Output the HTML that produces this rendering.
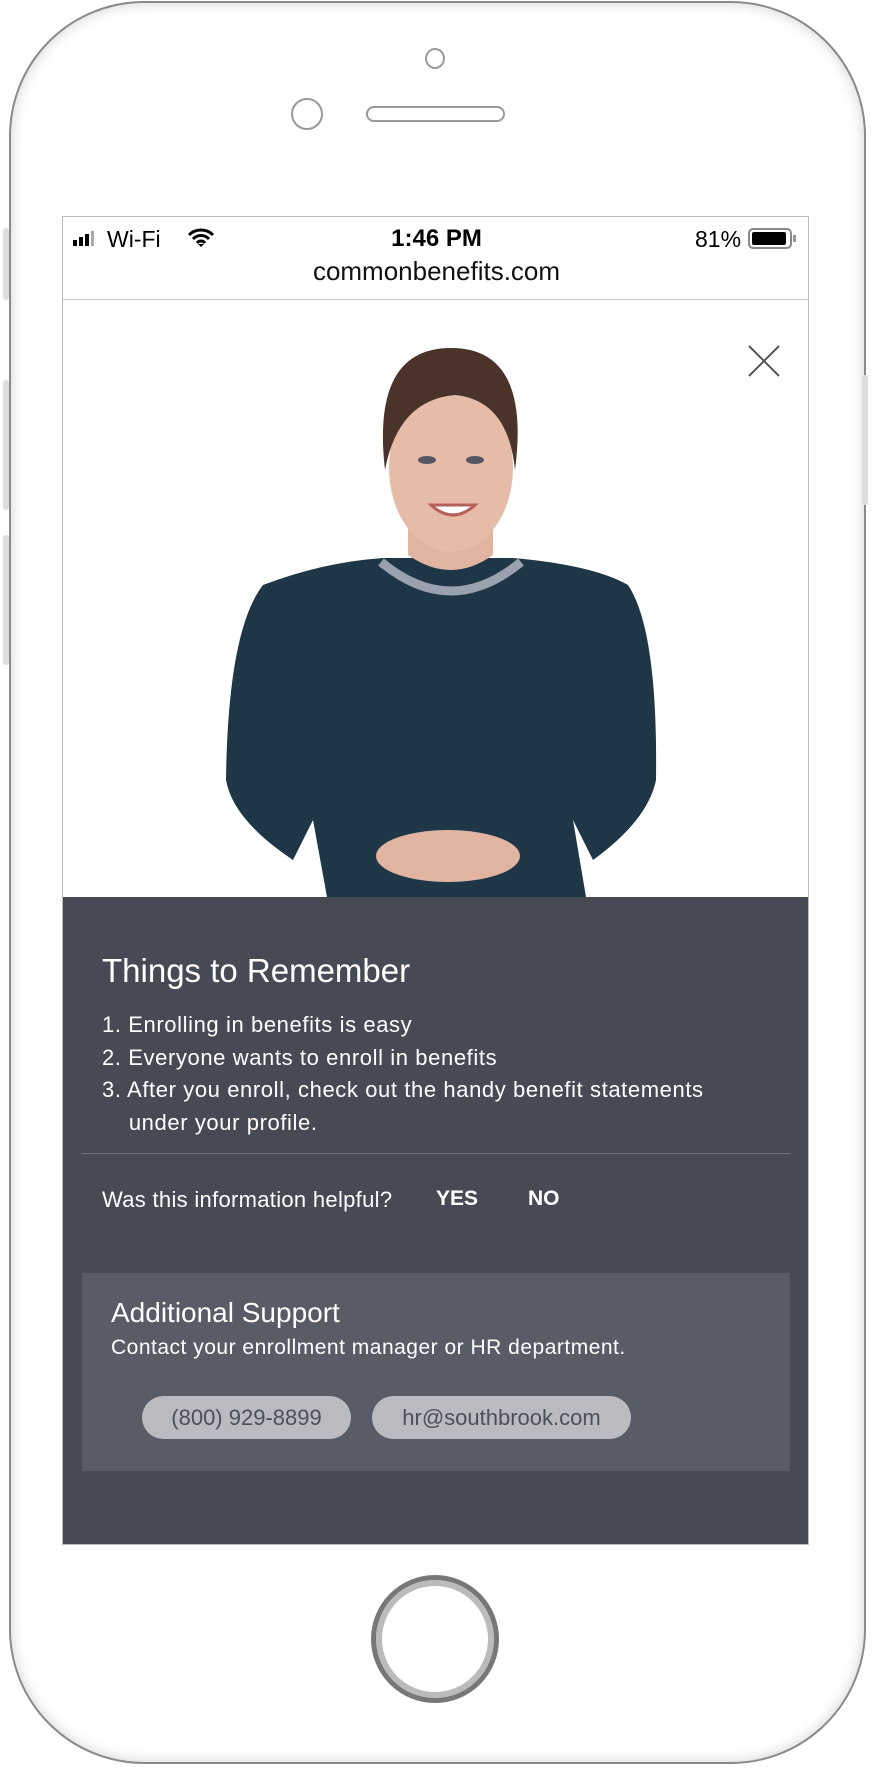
<!DOCTYPE html>
<html><head><meta charset="utf-8"><style>
*{margin:0;padding:0;box-sizing:border-box}
body{width:872px;height:1768px;background:#fff;position:relative;overflow:hidden;font-family:"Liberation Sans",sans-serif}
.abs{position:absolute}
.phone{left:9px;top:1px;width:857px;height:1763px;border:2px solid #8a8a8a;border-radius:135px;background:#fff;box-shadow:inset 0 0 14px rgba(0,0,0,.18)}
.screen{left:62px;top:216px;width:747px;height:1329px;border:1px solid #bbb;background:#fff;overflow:hidden}
.t{position:absolute;white-space:nowrap}
.dark{left:0;top:680px;width:747px;height:649px;background:#454a54}
.pill{position:absolute;height:43px;border-radius:22px;background:#b9bbc0;color:#4a4f58;font-size:22px;line-height:43px;text-align:center}
</style></head><body>
<div class="abs phone"></div>
<div class="abs" style="left:3px;top:228px;width:6px;height:72px;background:#ddd;border-radius:3px"></div>
<div class="abs" style="left:3px;top:380px;width:6px;height:130px;background:#ddd;border-radius:3px"></div>
<div class="abs" style="left:3px;top:535px;width:6px;height:130px;background:#ddd;border-radius:3px"></div>
<div class="abs" style="left:862px;top:375px;width:6px;height:130px;background:#ddd;border-radius:3px"></div>
<div class="abs" style="left:425px;top:48px;width:20px;height:21px;border:2px solid #999;border-radius:50%"></div>
<div class="abs" style="left:291px;top:98px;width:32px;height:32px;border:2px solid #999;border-radius:50%"></div>
<div class="abs" style="left:366px;top:106px;width:139px;height:16px;border:2px solid #999;border-radius:8px"></div>
<div class="abs" style="left:371px;top:1575px;width:128px;height:128px;border-radius:50%;border:5px solid #777;box-shadow:inset 0 0 0 6px #bbb"></div>

<div class="abs screen">
  <svg class="abs" style="left:10px;top:14px" width="32" height="16"><rect x="0" y="9" width="4" height="6" fill="#000"/><rect x="6" y="6" width="4" height="9" fill="#000"/><rect x="12" y="3" width="4" height="12" fill="#000"/><rect x="18" y="0" width="3" height="15" fill="#aaa"/></svg>
  <div class="t" style="left:44px;top:9px;font-size:23px">Wi-Fi</div>
  <svg class="abs" style="left:125px;top:11px" width="26" height="20" viewBox="0 0 26 20"><path d="M1 7a17 17 0 0 1 24 0M5 11a11 11 0 0 1 16 0M9 15a5 5 0 0 1 8 0" stroke="#000" stroke-width="3" fill="none"/><path d="M10 16l3 3 3-3z" fill="#000"/></svg>
  <div class="t" style="left:0;width:747px;text-align:center;top:8px;font-size:24px;font-weight:bold">1:46 PM</div>
  <div class="t" style="left:632px;top:9px;font-size:23px">81%</div>
  <div class="abs" style="left:685px;top:11px;width:44px;height:21px;border:2px solid #888;border-radius:5px"><div style="margin:2px;width:34px;height:13px;background:#000;border-radius:2px"></div></div>
  <div class="abs" style="left:730px;top:18px;width:3px;height:7px;background:#999"></div>
  <div class="t" style="left:0;width:747px;text-align:center;top:39px;font-size:26px;color:#111">commonbenefits.com</div>
  <div class="abs" style="left:0;top:82px;width:747px;height:1px;background:#ccc"></div>
  <svg class="abs" style="left:685px;top:128px" width="32" height="32"><path d="M1 1L31 31M31 1L1 31" stroke="#555" stroke-width="2"/></svg>
  <svg class="abs" style="left:0;top:83px" width="747" height="597" viewBox="0 0 747 597">
    <path d="M264 597 L250 520 L230 560 Q170 520 163 480 Q165 330 200 285 Q260 262 320 258 L450 258 Q530 265 565 285 Q595 330 593 480 Q585 520 530 560 L510 520 L523 597 Z" fill="#1e3646"/>
    <path d="M345 255 L345 215 L430 215 L430 255 Q388 285 345 255Z" fill="#e0b4a0"/>
    <path d="M318 262 Q388 320 458 262" stroke="#9aa2b0" stroke-width="9" fill="none"/>
    <ellipse cx="388" cy="168" rx="62" ry="84" fill="#e6bca8"/>
    <path d="M322 170 Q308 48 388 48 Q468 48 452 170 Q445 100 392 95 Q335 100 322 170Z" fill="#4a342a"/>
    <ellipse cx="364" cy="160" rx="9" ry="4" fill="#556"/><ellipse cx="412" cy="160" rx="9" ry="4" fill="#556"/>
    <path d="M368 205 Q390 225 412 205 Z" fill="#fff" stroke="#b5605a" stroke-width="3"/>
    <ellipse cx="385" cy="556" rx="72" ry="26" fill="#e0b4a0"/>
  </svg>
  <div class="abs dark">
    <div class="t" style="left:39px;top:55px;font-size:33px;color:#fff">Things to Remember</div>
    <div class="t" style="left:39px;top:112px;font-size:22px;letter-spacing:0.6px;color:#fff;line-height:32.5px">1. Enrolling in benefits is easy<br>2. Everyone wants to enroll in benefits<br>3. After you enroll, check out the handy benefit statements<br>&nbsp;&nbsp;&nbsp;&nbsp;under your profile.</div>
    <div class="abs" style="left:19px;top:256px;width:708px;height:1px;background:#6a6f78"></div>
    <div class="t" style="left:39px;top:290px;font-size:22px;letter-spacing:0.3px;color:#fff">Was this information helpful?</div>
    <div class="t" style="left:373px;top:290px;font-size:21px;color:#fff;font-weight:bold">YES</div>
    <div class="t" style="left:465px;top:290px;font-size:21px;color:#fff;font-weight:bold">NO</div>
    <div class="abs" style="left:19px;top:376px;width:708px;height:198px;background:#575c66">
      <div class="t" style="left:29px;top:24px;font-size:28px;color:#fff">Additional Support</div>
      <div class="t" style="left:29px;top:63px;font-size:21px;letter-spacing:0.5px;color:#fff">Contact your enrollment manager or HR department.</div>
      <div class="pill" style="left:60px;top:123px;width:209px">(800) 929-8899</div>
      <div class="pill" style="left:290px;top:123px;width:259px">hr@southbrook.com</div>
    </div>
  </div>
</div>
</body></html>
